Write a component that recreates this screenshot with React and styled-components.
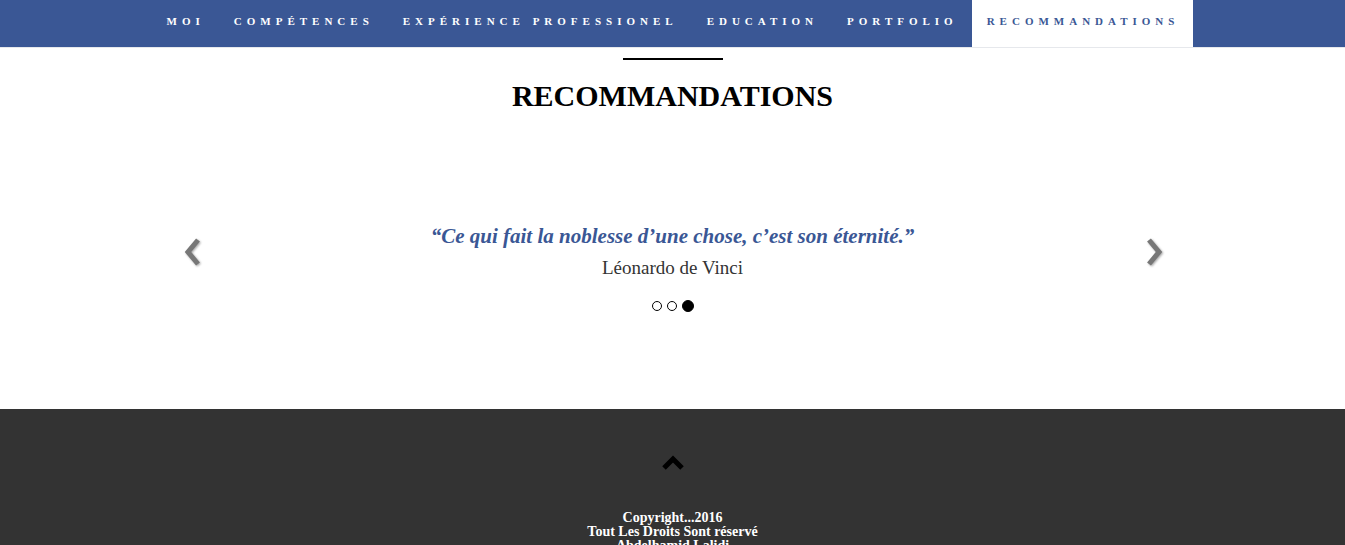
import * as React from 'react';
import styled, { createGlobalStyle } from 'styled-components';

const GlobalStyle = createGlobalStyle`
  html, body {
    margin: 0;
    padding: 0;
    background: #fff;
    font-family: "Liberation Serif", "Times New Roman", serif;
  }
`

const NavBar = styled.nav`
  display: flex;
  justify-content: center;
  height: 48px;
  background: #3a5795;
  border-bottom: 1px solid #e6e8ec;
  box-sizing: border-box;
`

const NavItem = styled.a`
  display: flex;
  align-items: center;
  padding: 0 14px 5px 15px;
  font-size: 11px;
  font-weight: bold;
  letter-spacing: 5px;
  text-transform: uppercase;
  text-decoration: none;
  color: ${p => (p.$active ? '#3a5795' : '#fff')};
  background: ${p => (p.$active ? '#fff' : 'transparent')};
`

const Section = styled.section`
  display: flex;
  flex-direction: column;
  align-items: center;
  height: 361px;
  padding-top: 10px;
  box-sizing: border-box;
`

const Rule = styled.div`
  width: 100px;
  height: 2px;
  background: #000;
`

const Title = styled.h2`
  margin: 19px 0 0;
  font-size: 30px;
  font-weight: bold;
  color: #000;
  line-height: 34px;
`

const Carousel = styled.div`
  position: relative;
  width: 1000px;
  margin-top: 109px;
  display: flex;
  flex-direction: column;
  align-items: center;
`

const Quote = styled.p`
  margin: 0;
  font-size: 21px;
  font-style: italic;
  font-weight: bold;
  color: #3a5795;
  line-height: 28px;
`

const Author = styled.p`
  margin: 7px 0 0;
  font-size: 19px;
  color: #333;
  line-height: 22px;
`

const Dots = styled.div`
  display: flex;
  align-items: center;
  gap: 5px;
  margin-top: 21px;
`

const Dot = styled.span`
  width: ${p => (p.$active ? '12px' : '10px')};
  height: ${p => (p.$active ? '12px' : '10px')};
  border-radius: 50%;
  box-sizing: border-box;
  border: 1.5px solid #000;
  background: ${p => (p.$active ? '#000' : '#fff')};
`

const Arrow = styled.button`
  position: absolute;
  top: 13px;
  ${p => (p.$side === 'left' ? 'left: 8px;' : 'right: 6px;')}
  width: 26px;
  height: 34px;
  padding: 0;
  border: none;
  background: none;
  filter: drop-shadow(1px 1px 1px rgba(0, 0, 0, 0.35));
`

const Footer = styled.footer`
  background: #333;
  display: flex;
  flex-direction: column;
  align-items: center;
  padding-top: 45px;
  height: 200px;
  box-sizing: border-box;
`

const UpIcon = styled.svg`
  display: block;
`

const FooterText = styled.p`
  margin: 40px 0 0;
  font-size: 14px;
  font-weight: bold;
  line-height: 14px;
  color: #fff;
  text-align: center;
`

const links = ['Moi', 'Compétences', 'Expérience Professionel', 'Education', 'Portfolio', 'Recommandations']

const Chevron = ({ dir }) => (
  <svg width="26" height="34" viewBox="0 0 26 34">
    <polyline
      points={dir === 'left' ? '17,5 7,17 17,29' : '8,5 18,17 8,29'}
      fill="none"
      stroke="#777"
      strokeWidth="5"
    />
  </svg>
)

const App = () => {
  return (
    <>
      <GlobalStyle />
      <NavBar>
        {links.map(l => (
          <NavItem key={l} href="#" $active={l === 'Recommandations'}>{l}</NavItem>
        ))}
      </NavBar>
      <Section>
        <Rule />
        <Title>RECOMMANDATIONS</Title>
        <Carousel>
          <Arrow $side="left"><Chevron dir="left" /></Arrow>
          <Quote>“Ce qui fait la noblesse d’une chose, c’est son éternité.”</Quote>
          <Author>Léonardo de Vinci</Author>
          <Dots>
            <Dot />
            <Dot />
            <Dot $active />
          </Dots>
          <Arrow $side="right"><Chevron dir="right" /></Arrow>
        </Carousel>
      </Section>
      <Footer>
        <UpIcon width="24" height="17" viewBox="0 0 24 17">
          <polyline points="3,14 12,5 21,14" fill="none" stroke="#000" strokeWidth="5" />
        </UpIcon>
        <FooterText>
          Copyright...2016<br />
          Tout Les Droits Sont réservé<br />
          Abdelhamid Lalidi
        </FooterText>
      </Footer>
    </>
  );
}

export default App;
